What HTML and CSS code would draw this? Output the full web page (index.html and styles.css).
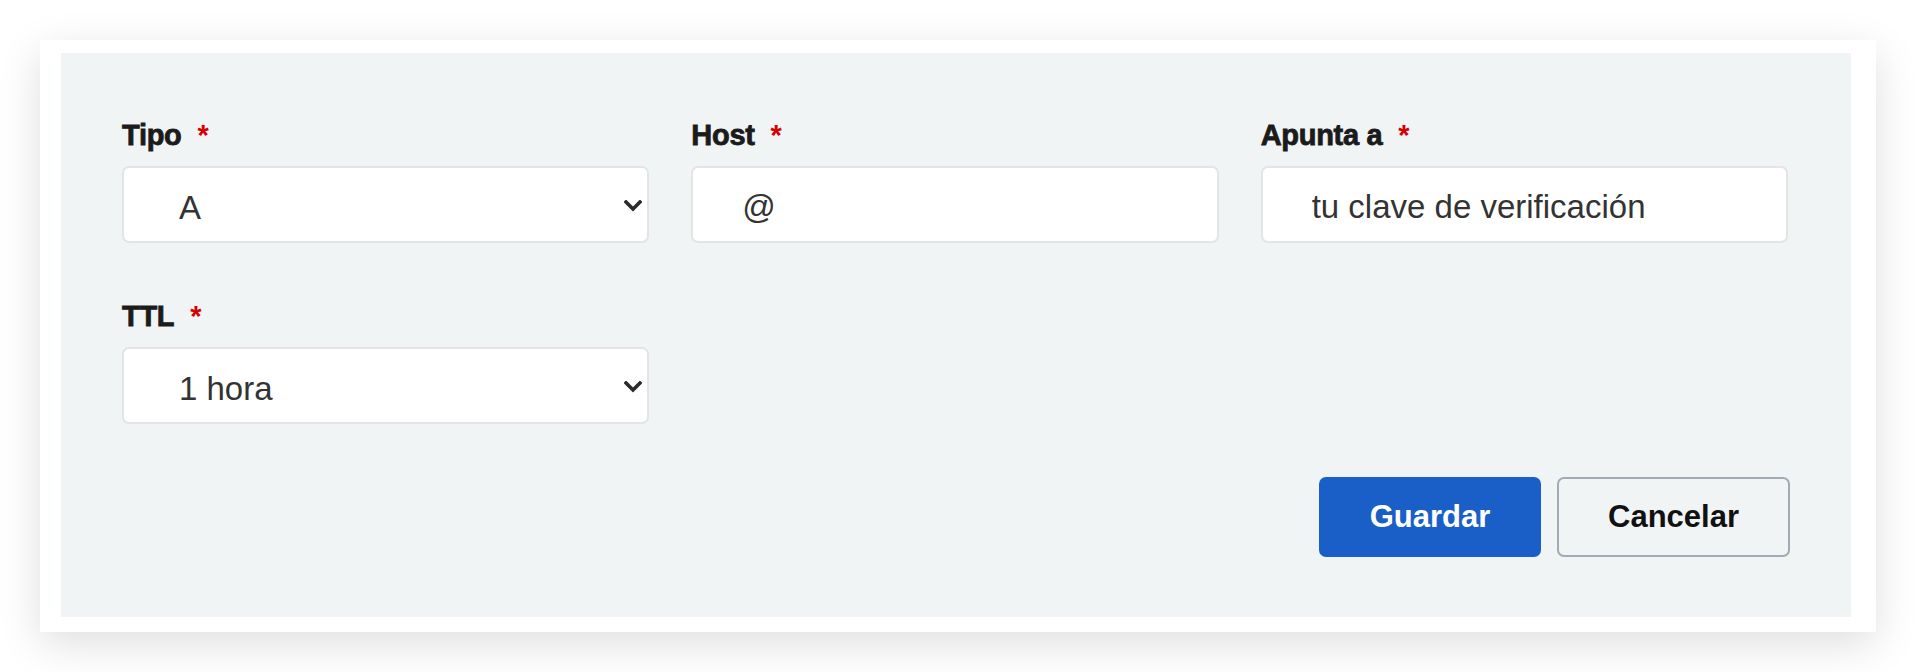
FILE: index.html
```html
<!DOCTYPE html>
<html lang="es">
<head>
<meta charset="utf-8">
<title>Registro DNS</title>
<link rel="stylesheet" href="styles.css">
</head>
<body>
<div class="card">
  <form class="panel">
    <div class="grid">
      <div class="field">
        <label class="label" for="tipo">Tipo<span class="req">*</span></label>
        <div class="select-wrap">
          <select id="tipo" class="control select"><option>A</option></select>
          <svg class="chev" width="18" height="12" viewBox="0 0 18 12"><polyline points="2,2 9,9 16,2" fill="none" stroke="#2b2b2b" stroke-width="3.6" stroke-linecap="square" stroke-linejoin="miter"/></svg>
        </div>
      </div>
      <div class="field">
        <label class="label" for="host">Host<span class="req">*</span></label>
        <input id="host" class="control input" value="@">
      </div>
      <div class="field">
        <label class="label" for="apunta">Apunta a<span class="req">*</span></label>
        <input id="apunta" class="control input" value="tu clave de verificación">
      </div>
      <div class="field row2">
        <label class="label" for="ttl">TTL<span class="req">*</span></label>
        <div class="select-wrap">
          <select id="ttl" class="control select"><option>1 hora</option></select>
          <svg class="chev" width="18" height="12" viewBox="0 0 18 12"><polyline points="2,2 9,9 16,2" fill="none" stroke="#2b2b2b" stroke-width="3.6" stroke-linecap="square" stroke-linejoin="miter"/></svg>
        </div>
      </div>
    </div>
    <div class="actions">
      <button type="button" class="btn btn-primary">Guardar</button>
      <button type="button" class="btn btn-secondary">Cancelar</button>
    </div>
  </form>
</div>
</body>
</html>
```
FILE: styles.css
```css
html, body {
  margin: 0;
  padding: 0;
  background: #ffffff;
}
body {
  padding: 40px;
  font-family: "Liberation Sans", Arial, sans-serif;
}
.card {
  background: #ffffff;
  padding: 13px 25px 15px 21px;
  box-shadow: 0 12px 40px rgba(0, 0, 0, 0.13);
}
.panel {
  background: #f1f4f5;
  padding: 65px 63px 60px 61px;
}
.grid {
  display: grid;
  grid-template-columns: 1fr 1fr 1fr;
  column-gap: 42px;
  row-gap: 56px;
}
.row2 {
  grid-column: 1;
}
.field {
  display: flex;
  flex-direction: column;
}
.label {
  font-family: "Liberation Sans", Arial, sans-serif;
  font-weight: 700;
  font-size: 29px;
  line-height: 33px;
  color: #1b1b1b;
  margin-bottom: 14px;
  padding-top: 1px;
  letter-spacing: -0.3px;
  -webkit-text-stroke: 0.8px #1b1b1b;
}
.req {
  color: #d50000;
  margin-left: 16px;
  -webkit-text-stroke: 0;
}
.control {
  box-sizing: border-box;
  width: 100%;
  height: 77px;
  margin: 0;
  background: #ffffff;
  border: 2px solid #e2e4e6;
  border-radius: 7px;
  font-family: "Liberation Sans", Arial, sans-serif;
  font-size: 33px;
  color: #333333;
  outline: none;
}
.input {
  padding: 5px 20px 0 49px;
}
.select-wrap {
  position: relative;
}
.select {
  appearance: none;
  -webkit-appearance: none;
  padding: 5px 40px 0 55px;
}
.chev {
  position: absolute;
  right: 7px;
  top: 34px;
  pointer-events: none;
}
.actions {
  display: flex;
  justify-content: flex-end;
  gap: 16px;
  margin-top: 53px;
  margin-right: -2px;
}
.btn {
  box-sizing: border-box;
  height: 80px;
  border-radius: 7px;
  font-family: "Liberation Sans", Arial, sans-serif;
  font-weight: 700;
  font-size: 31px;
  cursor: pointer;
}
.btn-primary {
  width: 222px;
  background: #1a5fc7;
  border: none;
  color: #ffffff;
}
.btn-secondary {
  width: 233px;
  background: transparent;
  border: 2px solid #a1aab5;
  color: #111111;
}
```
